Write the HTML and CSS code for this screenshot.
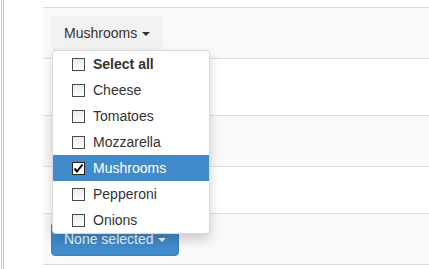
FILE: index.html
```html
<!DOCTYPE html>
<html>
<head>
<meta charset="utf-8">
<link rel="stylesheet" href="styles.css">
</head>
<body>
<div class="page">
  <div class="rail"></div>
  <div class="table">
    <div class="row striped r1">
      <div class="btn-group">
        <button class="btn btn-default">Mushrooms <span class="caret"></span></button>
        <ul class="menu">
          <li class="item bold"><span class="cb"></span>Select all</li>
          <li class="item"><span class="cb"></span>Cheese</li>
          <li class="item"><span class="cb"></span>Tomatoes</li>
          <li class="item"><span class="cb"></span>Mozzarella</li>
          <li class="item active"><span class="cb"><svg viewBox="0 0 13 13" width="13" height="13"><path d="M2.5 6.5 L5 9.5 L10.5 2.5" fill="none" stroke="#000" stroke-width="2"/></svg></span>Mushrooms</li>
          <li class="item"><span class="cb"></span>Pepperoni</li>
          <li class="item"><span class="cb"></span>Onions</li>
        </ul>
      </div>
    </div>
    <div class="row r2"></div>
    <div class="row striped r3"></div>
    <div class="row r4"></div>
    <div class="row striped r5">
      <button class="btn btn-primary">None selected <span class="caret"></span></button>
    </div>
  </div>
</div>
</body>
</html>
```

FILE: styles.css
```css
html, body {
  margin: 0;
  padding: 0;
  background: #fff;
}
body {
  font-family: "Liberation Sans", Arial, sans-serif;
  font-size: 14px;
  color: #333;
}
.page {
  display: flex;
  align-items: flex-start;
  height: 269px;
  overflow: hidden;
}
.rail {
  margin-left: 1px;
  width: 1px;
  height: 269px;
  border-left: 1px solid #cdcac3;
  border-right: 1px solid #cdcac3;
  flex: none;
}
.table {
  margin-left: 39px;
  margin-top: 7px;
  flex: 1;
  border-bottom: 1px solid #ddd;
}
.row {
  border-top: 1px solid #ddd;
  padding: 8px 8px;
  box-sizing: border-box;
}
.striped { background: #f9f9f9; }
.r1 { height: 51px; }
.r2 { height: 57px; }
.r3 { height: 51px; }
.r4 { height: 47px; }
.r5 { height: 51px; }
.btn-group {
  position: relative;
  display: inline-block;
}
.btn {
  font-family: inherit;
  font-size: 14px;
  line-height: 20px;
  height: 34px;
  padding: 6px 12px;
  border-radius: 4px;
  border: 1px solid transparent;
  margin: 0;
  box-sizing: border-box;
}
.btn-default {
  background: #f2f2f2;
  border-color: #efefef;
  color: #333;
}
.btn-primary {
  background: #428bca;
  border-color: #3b80c0;
  color: #f4f8fc;
}
.caret {
  display: inline-block;
  width: 0;
  height: 0;
  margin-left: 1px;
  vertical-align: middle;
  border-top: 4px solid currentColor;
  border-left: 4px solid transparent;
  border-right: 4px solid transparent;
}
.menu {
  position: absolute;
  top: 34px;
  left: 1px;
  z-index: 10;
  width: 158px;
  box-sizing: border-box;
  margin: 0;
  padding: 0;
  list-style: none;
  background: #fff;
  border: 1px solid rgba(0,0,0,0.15);
  border-radius: 4px;
  box-shadow: 0 6px 12px rgba(0,0,0,0.175);
}
.item {
  height: 26px;
  display: flex;
  align-items: center;
  padding-left: 19px;
  color: #333;
}
.item.bold { font-weight: bold; }
.item.active {
  background: #428bca;
  color: #fff;
}
.cb {
  width: 11px;
  height: 11px;
  border: 1px solid #4a4a4a;
  background: linear-gradient(#e9e9e9, #fff);
  margin-right: 8px;
  flex: none;
  position: relative;
}
.cb svg {
  position: absolute;
  left: -1px;
  top: -1px;
}
.active .cb { background: #fff; border-color: #222; }
```
